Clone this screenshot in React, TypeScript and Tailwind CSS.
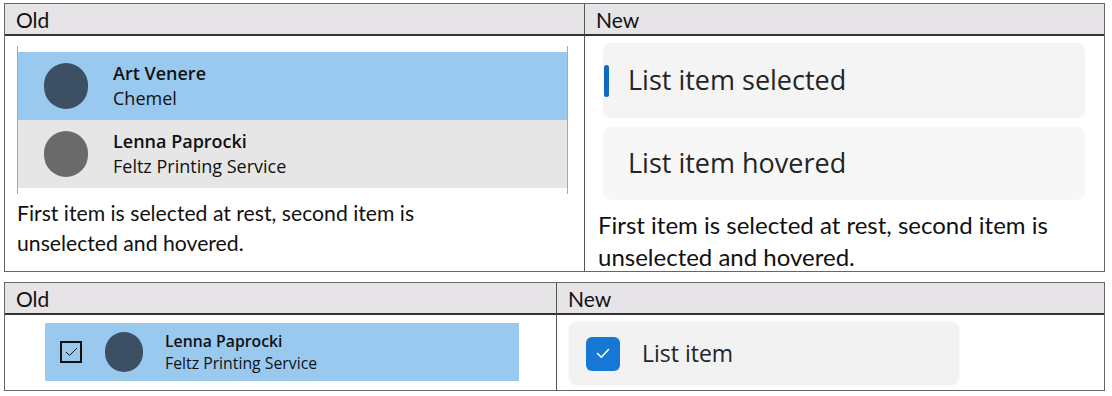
import React from "react";

const caption = "font-['Lato','Liberation_Sans',sans-serif] text-[#111]";
const ui = "font-['Open_Sans','Noto_Sans',sans-serif]";

function Avatar({ color, size }: { color: string; size: string }) {
    return <div className={`rounded-full shrink-0 ${size}`} style={{ backgroundColor: color }} />;
}

function HeaderCell({ label, last }: { label: string; last?: boolean }) {
    return (
        <div className={`h-[32px] bg-[#e6e4e6] border-b-2 border-[#333] pl-[11px] flex items-center text-[21px] leading-none ${caption} ${last ? "" : "border-r border-r-[#555]"}`}>
            {label}
        </div>
    );
}

export default function App() {
    return (
        <div className="w-[1112px] h-[396px] bg-white pt-[3px] pl-[4px]">
            {/* First table: selected + hovered */}
            <div className="w-[1101px] border border-[#666] grid grid-cols-[580px_519px]">
                <HeaderCell label="Old" />
                <HeaderCell label="New" last />

                {/* Old list */}
                <div className="border-r border-[#555] h-[235px] pl-[12px] pt-[10px]">
                    <div className="w-[551px] border-x border-[#aaa] py-[6px]">
                        <div className="h-[68px] bg-[#99c9ef] flex items-center pl-[26px] gap-[25px]">
                            <Avatar color="#3d4f62" size="w-[44px] h-[46px]" />
                            <div className={`${ui} text-[18px] leading-[25px] text-[#111]`}>
                                <div className="font-semibold">Art Venere</div>
                                <div>Chemel</div>
                            </div>
                        </div>
                        <div className="h-[68px] bg-[#e6e6e6] flex items-center pl-[26px] gap-[25px]">
                            <Avatar color="#6a6a6a" size="w-[44px] h-[46px]" />
                            <div className={`${ui} text-[18px] leading-[25px] text-[#111]`}>
                                <div className="font-semibold">Lenna Paprocki</div>
                                <div>Feltz Printing Service</div>
                            </div>
                        </div>
                    </div>
                    <p className={`${caption} text-[21.2px] leading-[30px] mt-[4px] pr-[80px]`}>
                        First item is selected at rest, second item is unselected and hovered.
                    </p>
                </div>

                {/* New list */}
                <div className="h-[235px] pl-[18px] pt-[7px]">
                    <div className="w-[482px] flex flex-col gap-[9px]">
                        <div className="h-[75px] bg-[#f4f4f4] rounded-[8px] flex items-center relative pl-[25px]">
                            <div className="absolute left-[1px] top-[22px] w-[5px] h-[32px] rounded-full bg-[#1068bf]" />
                            <span className={`${ui} text-[27px] text-[#242424]`}>List item selected</span>
                        </div>
                        <div className="h-[73px] bg-[#f7f7f7] rounded-[8px] flex items-center pl-[25px]">
                            <span className={`${ui} text-[27px] text-[#242424]`}>List item hovered</span>
                        </div>
                    </div>
                    <p className={`${caption} text-[24px] leading-[32px] -ml-[5px] mt-[9px] pr-[20px]`}>
                        First item is selected at rest, second item is unselected and hovered.
                    </p>
                </div>
            </div>

            {/* Second table: multiselect */}
            <div className="w-[1101px] mt-[10px] border border-[#666] grid grid-cols-[552px_547px]">
                <HeaderCell label="Old" />
                <HeaderCell label="New" last />

                <div className="border-r border-[#555] h-[75px] pl-[40px] pt-[8px]">
                    <div className="w-[474px] h-[58px] bg-[#99c9ef] flex items-center pl-[15px]">
                        <div className="w-[22px] h-[22px] border-[2.5px] border-[#111] flex items-center justify-center">
                            <svg width="13" height="10" viewBox="0 0 13 10" fill="none">
                                <path d="M1 5l3.5 3.5L12 1" stroke="#111" strokeWidth="1" />
                            </svg>
                        </div>
                        <Avatar color="#3d4f62" size="w-[38px] h-[40px] ml-[23px]" />
                        <div className={`${ui} text-[15.8px] leading-[22px] text-[#111] ml-[22px]`}>
                            <div className="font-semibold">Lenna Paprocki</div>
                            <div>Feltz Printing Service</div>
                        </div>
                    </div>
                </div>

                <div className="h-[75px] pl-[12px] pt-[7px]">
                    <div className="w-[390px] h-[63px] bg-[#f2f2f2] rounded-[8px] flex items-center pl-[17px] shadow-[0_0_4px_rgba(0,0,0,0.04)]">
                        <div className="w-[34px] h-[34px] rounded-[6px] bg-[#1478d4] flex items-center justify-center">
                            <svg width="14" height="11" viewBox="0 0 14 11" fill="none">
                                <path d="M1.5 5.5l3.8 3.8L12.5 1.5" stroke="#fff" strokeWidth="1.6" strokeLinecap="round" strokeLinejoin="round" />
                            </svg>
                        </div>
                        <span className={`${ui} text-[23px] text-[#242424] ml-[22px]`}>List item</span>
                    </div>
                </div>
            </div>
        </div>
    );
}
